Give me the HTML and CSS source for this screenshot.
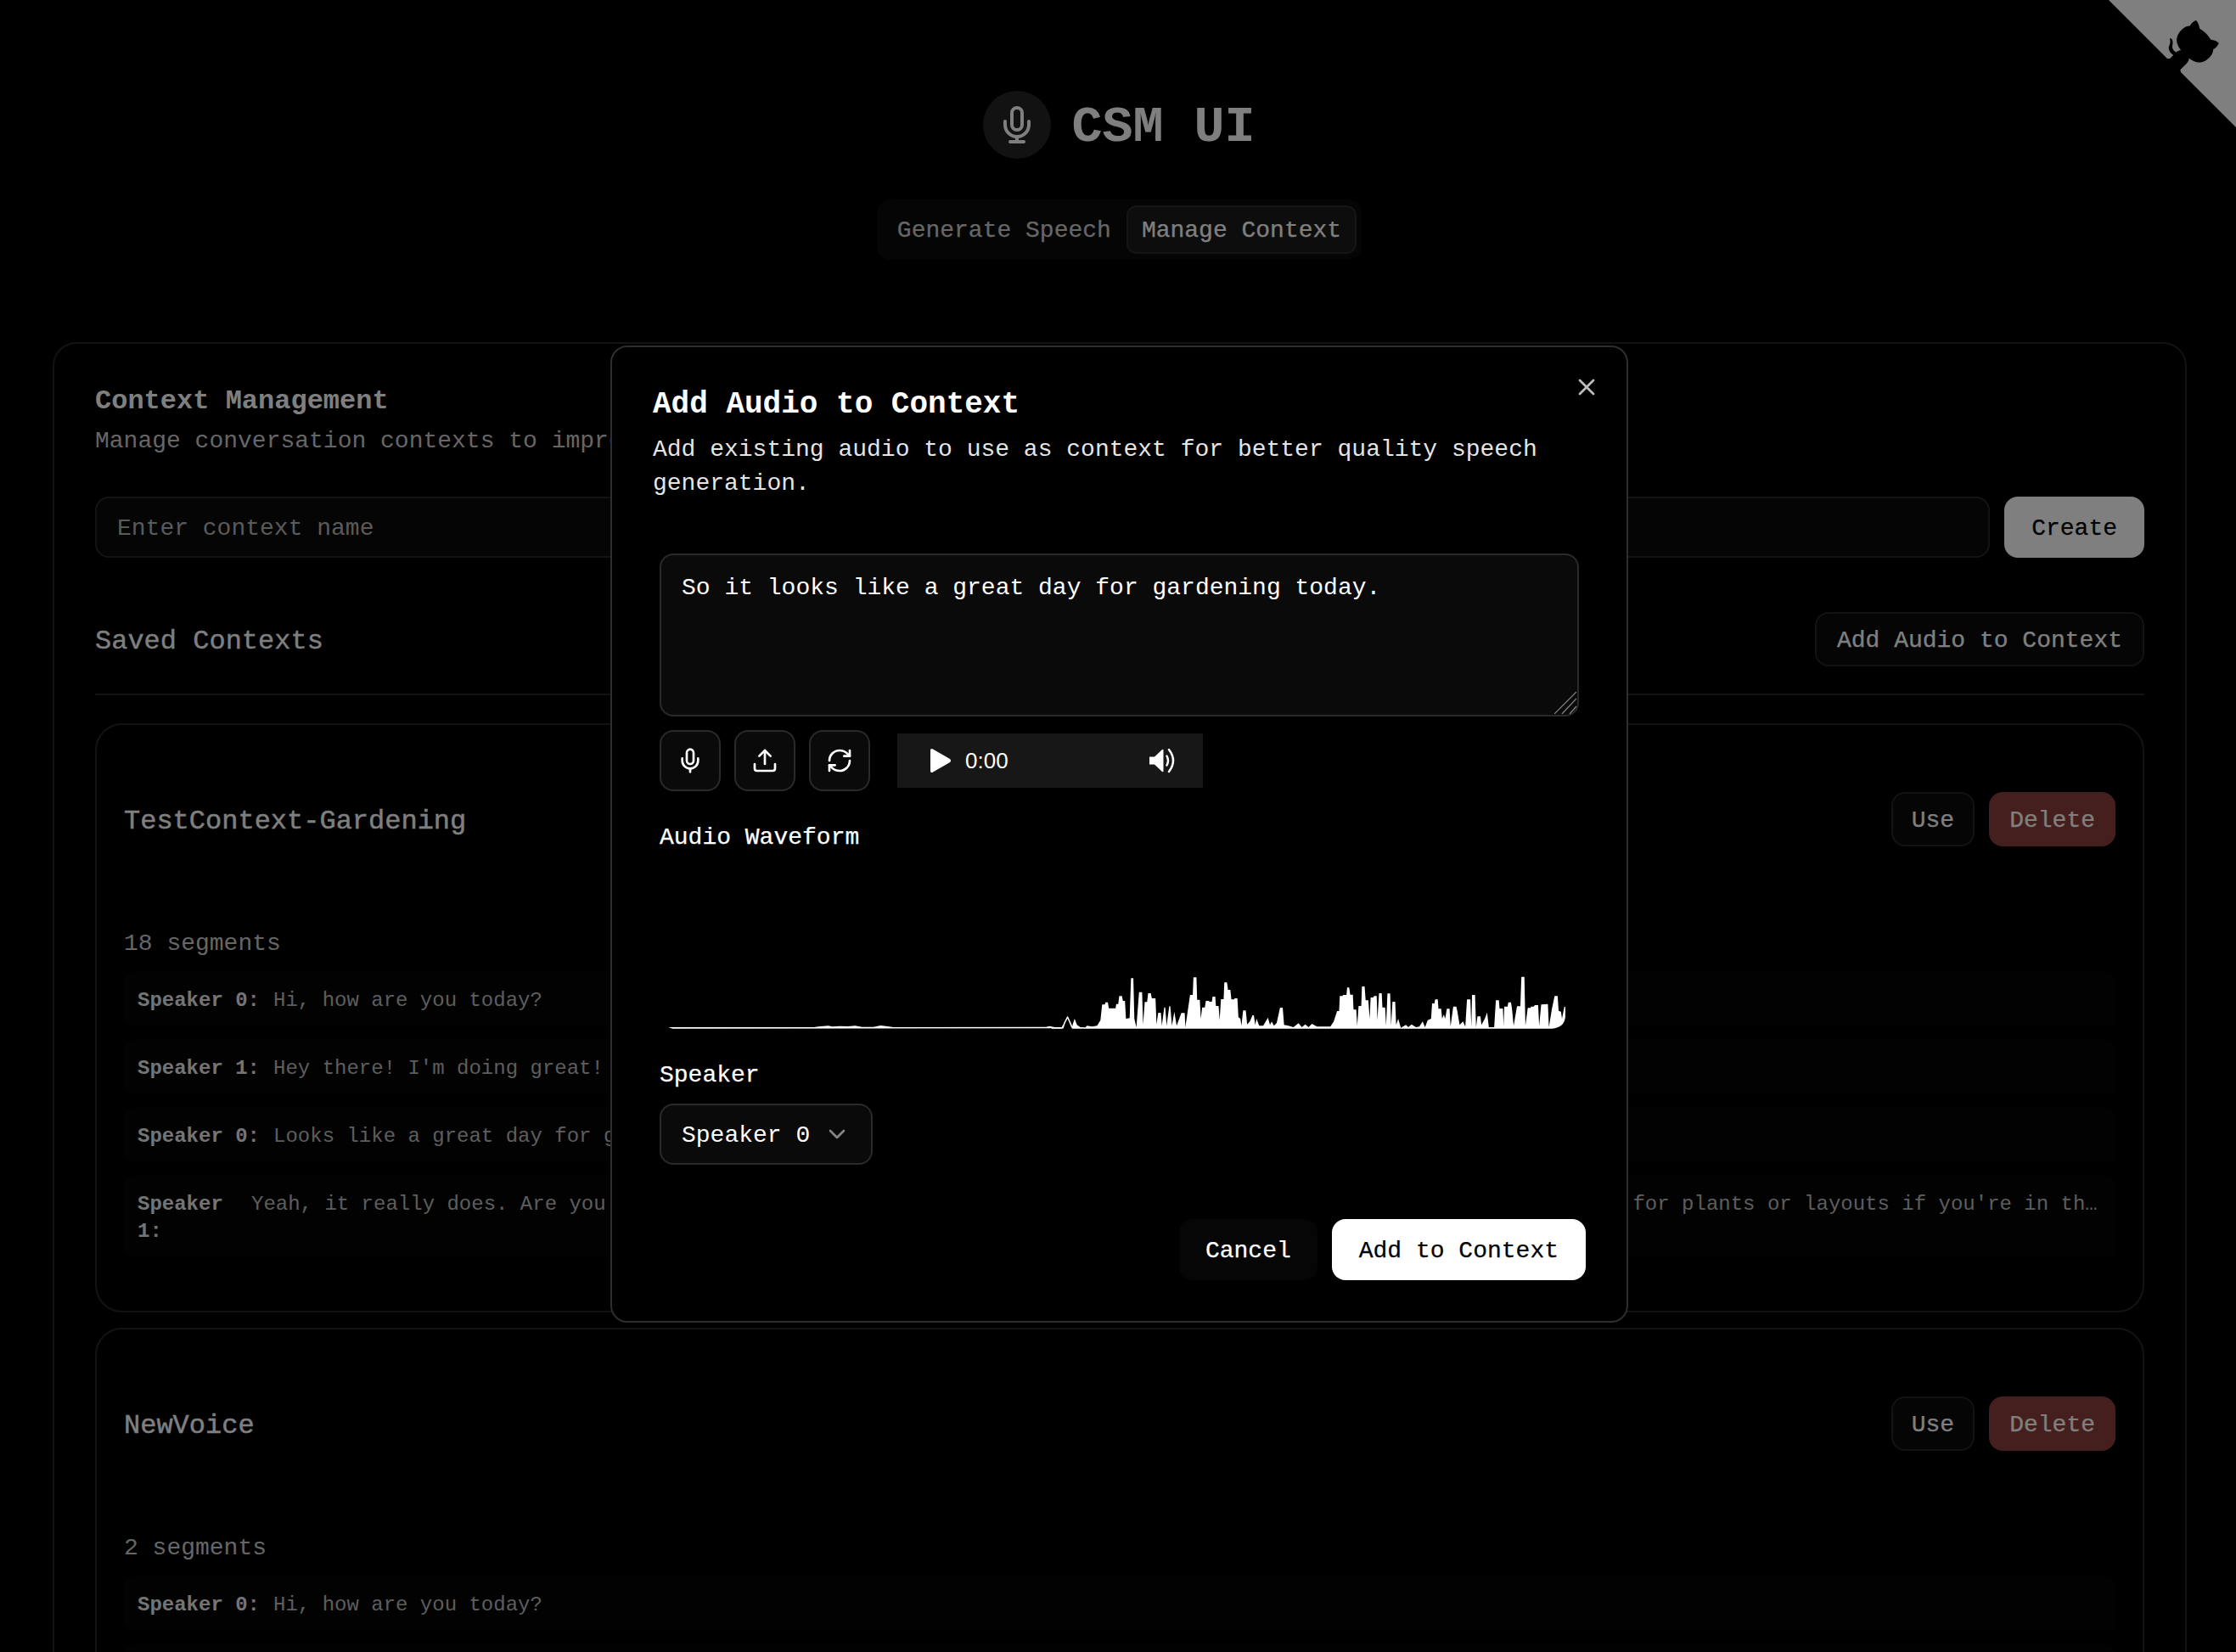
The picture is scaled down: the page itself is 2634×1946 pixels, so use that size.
FILE: index.html
```html
<!DOCTYPE html>
<html lang="en">
<head>
<meta charset="utf-8">
<title>CSM UI</title>
<link rel="stylesheet" href="styles.css">
</head>
<body>
<a class="corner" href="#" aria-label="View source">
  <svg class="corner-svg" viewBox="0 0 250 250">
    <path class="corner-bg" d="M0,0 L115,115 L130,115 L142,142 L250,250 L250,0 Z"/>
    <path class="corner-cat" d="M128.3,109.0 C113.8,99.7 119.0,89.6 119.0,89.6 C122.0,82.7 120.5,78.6 120.5,78.6 C119.2,72.0 123.4,76.3 123.4,76.3 C127.3,80.9 125.5,87.3 125.5,87.3 C122.9,97.6 130.6,101.9 134.4,103.2"/>
    <path class="corner-cat" d="M115.0,115.0 C114.9,115.1 118.7,116.5 119.8,115.4 L133.7,101.6 C136.9,99.2 139.9,98.4 142.2,98.6 C133.8,88.0 127.5,74.4 143.8,58.0 C148.5,53.4 154.0,51.2 159.7,51.0 C160.3,49.4 163.2,43.6 171.4,40.1 C171.4,40.1 176.1,42.5 178.8,56.2 C183.1,58.6 187.2,61.8 190.9,65.4 C194.5,69.0 197.7,73.2 200.1,77.6 C213.8,80.2 216.3,84.9 216.3,84.9 C212.7,93.1 206.9,96.0 205.4,96.6 C205.1,102.4 203.0,107.8 198.3,112.5 C181.9,128.9 168.3,122.5 157.7,114.1 C157.9,116.9 156.7,120.9 152.7,124.9 L141.0,136.5 C139.8,137.7 141.6,141.9 141.8,141.8 Z"/>
  </svg>
</a>

<header class="header">
  <div class="brand">
    <span class="brand-icon">
      <svg class="icon-48" viewBox="0 0 24 24"><path d="M12 2a3 3 0 0 0-3 3v7a3 3 0 0 0 6 0V5a3 3 0 0 0-3-3Z"/><path d="M19 10v2a7 7 0 0 1-14 0v-2"/><line x1="12" y1="19" x2="12" y2="22"/><line x1="8" y1="22" x2="16" y2="22"/></svg>
    </span>
    <h1 class="brand-title">CSM UI</h1>
  </div>
  <nav class="tabs">
    <span class="tab">Generate Speech</span>
    <span class="tab tab-active">Manage Context</span>
  </nav>
</header>

<main class="panel">
  <h2 class="panel-title">Context Management</h2>
  <p class="panel-desc">Manage conversation contexts to improve speech generation quality</p>
  <div class="create-row">
    <input class="text-input" type="text" placeholder="Enter context name">
    <button class="btn btn-primary">Create</button>
  </div>
  <div class="saved-head">
    <h3 class="saved-title">Saved Contexts</h3>
    <button class="btn btn-outline btn-wide">Add Audio to Context</button>
  </div>
  <div class="context-list">
    <section class="context-card">
      <div class="context-head">
        <h4 class="context-name">TestContext-Gardening</h4>
        <div class="context-actions">
          <button class="btn btn-outline">Use</button>
          <button class="btn btn-danger">Delete</button>
        </div>
      </div>
      <p class="seg-count">18 segments</p>
      <div class="seg-list">
        <div class="seg"><strong class="seg-label">Speaker 0:</strong><span class="seg-text">Hi, how are you today?</span></div>
        <div class="seg"><strong class="seg-label">Speaker 1:</strong><span class="seg-text">Hey there! I'm doing great! How about you?</span></div>
        <div class="seg"><strong class="seg-label">Speaker 0:</strong><span class="seg-text">Looks like a great day for gardening.</span></div>
        <div class="seg"><strong class="seg-label seg-label-wrap">Speaker 1:</strong><span class="seg-text">Yeah, it really does. Are you planning on doing any gardening this weekend or next? I've got a load of new ideas for plants or layouts if you're in the mood for something different this year.</span></div>
      </div>
    </section>
    <section class="context-card">
      <div class="context-head">
        <h4 class="context-name">NewVoice</h4>
        <div class="context-actions">
          <button class="btn btn-outline">Use</button>
          <button class="btn btn-danger">Delete</button>
        </div>
      </div>
      <p class="seg-count">2 segments</p>
      <div class="seg-list">
        <div class="seg"><strong class="seg-label">Speaker 0:</strong><span class="seg-text">Hi, how are you today?</span></div>
        <div class="seg"><strong class="seg-label">Speaker 1:</strong><span class="seg-text">Hey there! I'm doing great!</span></div>
      </div>
    </section>
  </div>
</main>

<div class="overlay">
  <div class="modal" role="dialog">
    <button class="modal-close" aria-label="Close">
      <svg class="icon-32" viewBox="0 0 24 24"><path d="M18 6 6 18"/><path d="m6 6 12 12"/></svg>
    </button>
    <h2 class="modal-title">Add Audio to Context</h2>
    <p class="modal-desc">Add existing audio to use as context for better quality speech generation.</p>
    <div class="modal-body">
      <div class="prompt-wrap">
        <textarea class="prompt">So it looks like a great day for gardening today.</textarea>
        <svg class="resize-grip" viewBox="0 0 26 26"><path d="M0 26 26 0"/><path d="M9 26 26 8"/><path d="M18 26 26 17"/></svg>
      </div>
      <div class="audio-row">
        <button class="icon-btn"><svg class="icon-32" viewBox="0 0 24 24"><path d="M12 2a3 3 0 0 0-3 3v7a3 3 0 0 0 6 0V5a3 3 0 0 0-3-3Z"/><path d="M19 10v2a7 7 0 0 1-14 0v-2"/><line x1="12" y1="19" x2="12" y2="22"/></svg></button>
        <button class="icon-btn"><svg class="icon-32" viewBox="0 0 24 24"><path d="M21 15v4a2 2 0 0 1-2 2H5a2 2 0 0 1-2-2v-4"/><polyline points="17 8 12 3 7 8"/><line x1="12" y1="3" x2="12" y2="15"/></svg></button>
        <button class="icon-btn"><svg class="icon-32" viewBox="0 0 24 24"><path d="M3 12a9 9 0 0 1 9-9 9.75 9.75 0 0 1 6.74 2.74L21 8"/><path d="M21 3v5h-5"/><path d="M21 12a9 9 0 0 1-9 9 9.75 9.75 0 0 1-6.74-2.74L3 16"/><path d="M8 16H3v5"/></svg></button>
        <div class="player">
          <svg class="play-icon" viewBox="0 0 26 30"><path d="M1 3 Q1 0 4 1.500 L24 13 Q26 15 24 17 L4 28.500 Q1 30 1 27 Z"/></svg>
          <span class="player-time">0:00</span>
          <svg class="volume-icon" viewBox="0 0 32 30"><path class="volume-fill" d="M0 10.500 H6 L15 2 Q16.500 1 16.500 3 V27 Q16.500 29 15 28 L6 19.500 H0 Q0 15 0 10.500 Z"/><path class="volume-line" d="M20.500 9.500 Q23.500 15 20.500 20.500"/><path class="volume-line" d="M23 2 Q33 15 23 28"/></svg>
        </div>
      </div>
      <div class="field-label wave-label">Audio Waveform</div>
      <div class="wave-box">
        <svg class="wave-svg" viewBox="18 0 1083 110">
          <g transform="translate(0 -20) scale(.33333)">
            <path class="wave-fill" d="M85,330 L600,330 L615,328 L650,325 L665,328 L690,326 L720,327 L745,325 L770,329 L810,329 L835,324 L860,327 L880,330 L1420,329 L1432,326 L1450,330 L1470,331 L1474,333 L1480,320 L1482,334 L100,335 Z"/>
          </g>
          <g transform="translate(480 0) scale(.39541 .33333)">
            <path class="wave-stroke" d="M0,272 L28,272 L33,272 L38,255 L47,234 L56,258 L60,270 L64,270"/>
            <path class="wave-fill" d="M0,275 L0,271 L28,271 L33,275 Z"/>
            <path class="wave-fill" d="M60,275 L62,262 L68,240 L75,262 L85,270 L100,271 L105,265 L120,268 L135,265 L145,245 L150,190 L158,190 L160,182 L167,182 L170,203 L190,203 L192,188 L198,188 L201,160 L209,160 L212,177 L218,177 L221,240 L232,238 L236,97 L243,97 L246,240 L252,270 L260,146 L269,146 L272,260 L277,181 L284,181 L287,150 L295,150 L298,168 L309,168 L312,260 L317,219 L325,219 L328,265 L335,200 L338,200 L342,265 L350,196 L353,196 L358,265 L365,215 L372,265 L386,220 L396,220 L398,270 L412,156 L420,156 L422,94 L431,94 L433,173 L441,173 L444,240 L448,200 L456,200 L459,177 L468,177 L470,180 L477,180 L479,162 L487,162 L489,195 L497,195 L500,245 L504,171 L512,171 L514,112 L522,112 L525,138 L532,138 L535,172 L543,172 L545,168 L553,168 L556,235 L562,240 L565,265 L570,211 L578,211 L582,260 L590,250 L598,228 L602,228 L606,262 L610,240 L618,265 L630,265 L644,236 L650,262 L655,250 L662,265 L670,255 L680,201 L688,201 L692,262 L705,265 L720,270 L735,256 L745,270 L755,260 L765,270 L775,258 L790,268 L830,268 L840,250 L850,213 L856,213 L858,160 L866,160 L868,156 L878,156 L880,130 L886,130 L889,155 L897,155 L899,208 L907,208 L910,265 L914,195 L922,195 L924,126 L932,126 L935,175 L943,175 L947,240 L950,165 L958,165 L960,160 L968,160 L970,245 L975,150 L983,150 L985,200 L993,200 L996,265 L1000,151 L1008,151 L1011,265 L1015,180 L1023,180 L1026,262 L1032,240 L1040,272 L1055,262 L1062,270 L1072,260 L1085,270 L1095,268 L1105,250 L1112,270 L1120,245 L1130,240 L1133,186 L1140,186 L1142,172 L1150,172 L1152,205 L1160,205 L1163,240 L1168,225 L1172,240 L1177,205 L1185,205 L1188,268 L1196,197 L1205,197 L1208,212 L1215,262 L1225,250 L1232,268 L1237,172 L1247,172 L1250,270 L1252,156 L1261,156 L1264,270 L1268,232 L1277,232 L1280,262 L1290,240 L1297,218 L1302,270 L1318,270 L1323,175 L1332,175 L1334,204 L1344,204 L1346,265 L1348,197 L1358,197 L1360,182 L1368,182 L1371,205 L1376,265 L1386,196 L1396,196 L1399,92 L1408,92 L1411,265 L1418,202 L1426,202 L1428,197 L1436,197 L1439,192 L1449,192 L1452,265 L1458,190 L1478,188 L1481,270 L1490,205 L1498,160 L1507,160 L1510,212 L1517,215 L1520,240 L1527,198 L1530,198 L1530,232 Q1528,272 1490,275 Z"/>
          </g>
        </svg>
      </div>
      <div class="field-label speaker-label">Speaker</div>
      <button class="select">
        <span>Speaker 0</span>
        <svg class="icon-32 select-chevron" viewBox="0 0 24 24"><path d="m6 9 6 6 6-6"/></svg>
      </button>
    </div>
    <div class="modal-footer">
      <button class="btn btn-ghost">Cancel</button>
      <button class="btn btn-white">Add to Context</button>
    </div>
  </div>
</div>
</body>
</html>
```
FILE: styles.css
```css
* { box-sizing: border-box; }
html, body { height: 100%; overflow: hidden; }
body {
  margin: 0;
  background: #000;
  color: #fff;
  font-family: "Liberation Mono", monospace;
  font-size: 28px;
  line-height: 40px;
}
h1, h2, h3, h4, p { margin: 0; }
button, input, textarea { font: inherit; color: inherit; }
button { cursor: pointer; }
svg { display: block; fill: none; stroke: currentColor; stroke-width: 2; stroke-linecap: round; stroke-linejoin: round; }
.icon-48 { width: 48px; height: 48px; }
.icon-32 { width: 32px; height: 32px; }

.corner { position: absolute; top: 0; right: 0; }
.corner-svg { width: 150px; height: 150px; stroke: none; }
.corner-bg { fill: #fff; }
.corner-cat { fill: #000; }

.header { display: flex; flex-direction: column; align-items: center; padding-top: 107px; }
.brand { display: flex; align-items: center; gap: 24px; margin-left: 3px; }
.brand-icon { width: 80px; height: 80px; border-radius: 50%; background: #242424; display: flex; align-items: center; justify-content: center; }
.brand-title { padding-top: 6px; font-size: 60px; line-height: 74px; font-weight: 700; }
.tabs { display: flex; margin: 48px 0 0 3px; padding: 7px 6px; background: #0a0a0a; border-radius: 16px; }
.tab { padding: 8px 16px 5px; border: 2px solid transparent; border-radius: 12px; color: #ccc; line-height: 40px; -webkit-text-stroke: .25px currentColor; }
.tab-active { background: #1a1a1a; border-color: #2a2a2a; color: #fff; }

.panel { margin: 97px 58px 0 62px; padding: 48px; border: 2px solid #262626; border-radius: 28px; }
.panel-title { padding-top: 2px; font-size: 32px; line-height: 36px; font-weight: 700; }
.panel-desc { margin-top: 9px; color: #ccc; white-space: nowrap; }
.create-row { display: flex; gap: 17px; margin-top: 45px; }
.text-input { flex: 1; height: 72px; padding: 3px 24px 0; background: #0a0a0a; border: 2px solid #262626; border-radius: 16px; outline: none; }
.text-input::placeholder { color: #b4b4b4; opacity: 1; }

.btn { height: 64px; padding: 4px 22px 0; border: 2px solid transparent; border-radius: 16px; white-space: nowrap; -webkit-text-stroke: .25px currentColor; }
.btn-wide { padding: 4px 24px 0; }
.btn-primary { height: 72px; padding: 4px 30px 0; background: #fff; color: #000; }
.btn-outline { background: #0a0a0a; border-color: #262626; }
.btn-danger { background: #8a3d3d; }
.btn-ghost { height: 72px; padding: 4px 29px 0; background: #060606; border-color: #060606; }
.btn-white { height: 72px; padding: 4px 30px 0; background: #fff; color: #000; }

.saved-head { display: flex; align-items: center; justify-content: space-between; margin-top: 64px; padding-bottom: 32px; border-bottom: 2px solid #262626; }
.saved-title { padding-top: 6px; font-size: 32px; line-height: 40px; font-weight: 400; -webkit-text-stroke: .3px currentColor; }
.context-list { display: flex; flex-direction: column; gap: 18px; margin-top: 33px; }
.context-card { height: 694px; flex: none; padding: 79px 32px 0; border: 2px solid #262626; border-radius: 32px; }
.context-head { display: flex; align-items: center; justify-content: space-between; }
.context-name { padding-top: 6px; font-size: 32px; line-height: 40px; font-weight: 400; -webkit-text-stroke: .4px currentColor; }
.context-actions { display: flex; gap: 17px; }
.seg-count { margin-top: 95px; color: #ccc; }
.seg-list { display: flex; flex-direction: column; gap: 16px; margin-top: 13px; }
.seg { display: flex; gap: 16px; padding: 18px 16px 14px; background: #050505; border-radius: 12px; font-size: 24px; line-height: 32px; color: #bbb; }
.seg-label { flex: none; font-weight: 700; color: #e8e8e8; }
.seg-label-wrap { width: 118px; }
.seg-text { flex: 1; min-width: 0; white-space: nowrap; overflow: hidden; text-overflow: ellipsis; }

.overlay { position: fixed; inset: 0; display: flex; justify-content: center; align-items: flex-start; padding: 407px 0 0 3px; background: rgba(0, 0, 0, .5); }
.modal { position: relative; width: 1199px; padding: 48px; background: #000; border: 2px solid #2e2e2e; border-radius: 20px; }
.modal-close { position: absolute; top: 31px; right: 31px; padding: 0; width: 32px; height: 32px; background: none; border: 0; color: #bdbdbd; }
.modal-title { padding-top: 2px; font-size: 36px; line-height: 36px; font-weight: 700; }
.modal-desc { margin-top: 15px; color: #e5e5e5; }
.modal-body { padding: 0 8px; margin-top: 62px; }
.prompt-wrap { position: relative; }
.prompt { display: block; width: 100%; height: 192px; padding: 19px 24px 13px; background: #0a0a0a; border: 2px solid #2a2a2a; border-radius: 16px; outline: none; resize: none; }
.resize-grip { position: absolute; right: 3px; bottom: 3px; width: 26px; height: 26px; stroke: #8a8a8a; stroke-width: 1.2; stroke-linecap: butt; }
.audio-row { display: flex; align-items: center; gap: 16px; margin-top: 16px; }
.icon-btn { width: 72px; height: 72px; padding: 0; display: flex; align-items: center; justify-content: center; background: #0a0a0a; border: 2px solid #2a2a2a; border-radius: 16px; }
.player { display: flex; align-items: center; width: 360px; height: 64px; margin-left: 16px; padding-left: 38px; background: #171717; }
.play-icon { width: 26px; height: 30px; fill: #fff; stroke: none; }
.player-time { margin-left: 16px; font-family: "Liberation Sans", sans-serif; font-size: 26px; }
.volume-icon { width: 32px; height: 30px; margin-left: 166px; }
.volume-fill { fill: #fff; stroke: none; }
.volume-line { stroke: #fff; stroke-width: 2.500; }
.field-label { font-weight: 400; -webkit-text-stroke: .25px currentColor; }
.wave-label { margin-top: 35px; }
.wave-box { display: flex; align-items: flex-end; height: 236px; padding-bottom: 13px; }
.wave-svg { width: 1083px; height: 110px; stroke: none; filter: blur(.6px); overflow: hidden; }
.wave-fill { fill: #fff; }
.wave-stroke { fill: none; stroke: #fff; stroke-width: 4; }
.speaker-label { margin-top: 4px; }
.select { display: flex; align-items: center; gap: 16px; height: 72px; margin-top: 13px; padding: 0 24px; background: #0a0a0a; border: 2px solid #2a2a2a; border-radius: 16px; }
.select span { padding-top: 4px; }
.select-chevron { opacity: .5; }
.modal-footer { display: flex; justify-content: flex-end; gap: 17px; margin-top: 64px; }
```
